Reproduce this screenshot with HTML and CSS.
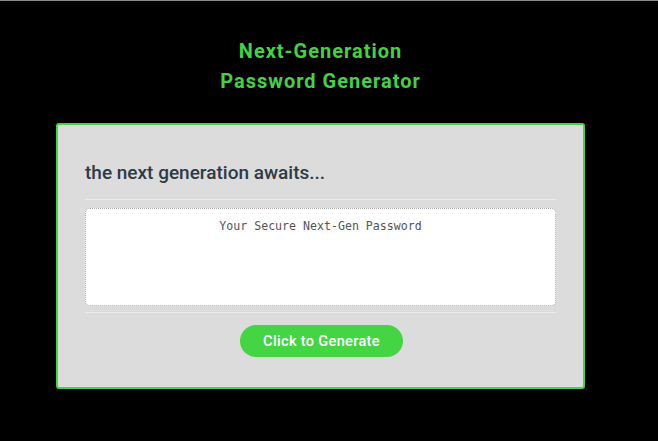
FILE: index.html
```html
<!DOCTYPE html>
<html lang="en">
<head>
<meta charset="utf-8">
<title>Password Generator</title>
<link rel="stylesheet" href="styles.css">
</head>
<body>
  <div class="page">
    <header class="site-header">
      <h1 class="title">Next-Generation<br>Password Generator</h1>
    </header>
    <main class="card">
      <h2 class="card-heading">the next generation awaits...</h2>
      <div class="card-body">
        <textarea class="password" readonly placeholder="Your Secure Next-Gen Password"></textarea>
      </div>
      <div class="card-footer">
        <button class="btn" type="button">Click to Generate</button>
      </div>
    </main>
  </div>
</body>
</html>
```
FILE: styles.css
```css
html, body {
  margin: 0;
  padding: 0;
}
body {
  background: #000;
  border-top: 1px solid #8a8a8a;
  height: 440px;
  font-family: Roboto, "Noto Sans", sans-serif;
}
.page {
  width: 641px;
}
.site-header {
  padding-top: 35px;
  display: flex;
  justify-content: center;
}
.title {
  margin: 0;
  font-size: 20px;
  font-weight: 700;
  line-height: 30px;
  letter-spacing: 1px;
  text-align: center;
  color: #45d045;
}
.card {
  margin: 27px 0 0 56px;
  width: 471px;
  height: 262px;
  background: #dcdcdc;
  border: 2px solid #4dcf4d;
  border-radius: 3px;
  padding: 0 27px;
  box-sizing: content-box;
  display: flex;
  flex-direction: column;
}
.card-heading {
  margin: 0;
  padding: 36px 0 14px;
  font-size: 19px;
  font-weight: 500;
  line-height: 24px;
  color: #2e3a45;
  border-bottom: 1px solid #ececec;
}
.card-body {
  padding: 8px 0 6px;
  border-bottom: 1px solid #ececec;
}
.password {
  display: block;
  width: 100%;
  height: 98px;
  box-sizing: border-box;
  margin: 0;
  resize: none;
  background: #fff;
  border: 1px dotted #a8a8a8;
  border-radius: 5px;
  padding: 10px 8px;
  font-family: "DejaVu Sans Mono", monospace;
  font-size: 11.6px;
  text-align: center;
  color: #555;
}
.password::placeholder {
  color: #555;
}
.card-footer {
  display: flex;
  justify-content: center;
  padding-top: 12px;
}
.btn {
  background: #44d444;
  color: #fff;
  border: none;
  border-radius: 16px;
  height: 32px;
  width: 163px;
  margin-left: 2px;
  font-family: Roboto, "Noto Sans", sans-serif;
  font-size: 14.5px;
  font-weight: 500;
  letter-spacing: 0.35px;
  padding: 0;
}
```
